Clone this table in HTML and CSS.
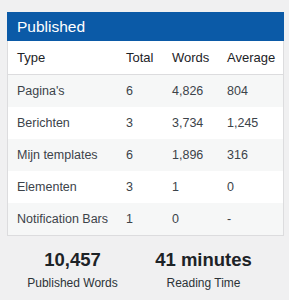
FILE: index.html
```html
<!DOCTYPE html>
<html lang="en">
<head>
    <meta charset="UTF-8">
    <meta name="viewport" content="width=device-width, initial-scale=1.0">
    <title>Published</title>
    <link rel="stylesheet" href="styles.css">
</head>
<body>
    <div class="panel">
        <div class="panel-title">Published</div>
        <table class="stats-table">
            <colgroup>
                <col class="col-type">
                <col class="col-total">
                <col class="col-words">
                <col class="col-avg">
            </colgroup>
            <thead>
                <tr>
                    <th>Type</th>
                    <th>Total</th>
                    <th>Words</th>
                    <th>Average</th>
                </tr>
            </thead>
            <tbody>
                <tr><td>Pagina's</td><td>6</td><td>4,826</td><td>804</td></tr>
                <tr><td>Berichten</td><td>3</td><td>3,734</td><td>1,245</td></tr>
                <tr><td>Mijn templates</td><td>6</td><td>1,896</td><td>316</td></tr>
                <tr><td>Elementen</td><td>3</td><td>1</td><td>0</td></tr>
                <tr><td>Notification Bars</td><td>1</td><td>0</td><td>-</td></tr>
            </tbody>
        </table>
    </div>

    <div class="totals">
        <div class="total">
            <div class="total-value">10,457</div>
            <div class="total-label">Published Words</div>
        </div>
        <div class="total">
            <div class="total-value">41 minutes</div>
            <div class="total-label">Reading Time</div>
        </div>
    </div>
</body>
</html>
```

FILE: styles.css
```css
body {
    font-family: 'Liberation Sans', Arial, sans-serif;
    margin: 0;
    padding: 12px 5px 0 7px;
    background-color: #f0f0f1;
    color: #2c3338;
}
.panel {
    width: 275px;
    border: 1px solid #dcdcde;
    border-top: none;
    background: #ffffff;
}
.panel-title {
    height: 29px;
    line-height: 30px;
    padding-left: 10px;
    margin: 0 -1px;
    background-color: #0b5aa7;
    color: #ffffff;
    font-size: 15.5px;
}
.stats-table {
    width: 275px;
    border-collapse: collapse;
    table-layout: fixed;
    font-size: 12.5px;
}
.col-type { width: 109px; }
.col-total { width: 46px; }
.col-words { width: 55px; }
.col-avg { width: 65px; }
.stats-table th,
.stats-table td {
    height: 32px;
    padding: 0 0 0 9px;
    text-align: left;
    font-weight: normal;
    white-space: nowrap;
}
.stats-table th {
    height: 33px;
    font-size: 13px;
    color: #1d2327;
    border-bottom: 1px solid #dcdcde;
}
.stats-table td {
    color: #3c434a;
}
.stats-table tbody tr:nth-child(odd) {
    background-color: #f6f7f7;
}
.totals {
    display: flex;
    padding-top: 12px;
}
.total {
    width: 131px;
    text-align: center;
}
.total-value {
    font-size: 18.5px;
    font-weight: 700;
    line-height: 24px;
    color: #1d2327;
}
.total-label {
    margin-top: 3px;
    font-size: 12px;
    line-height: 17px;
    color: #2c3338;
}
```
